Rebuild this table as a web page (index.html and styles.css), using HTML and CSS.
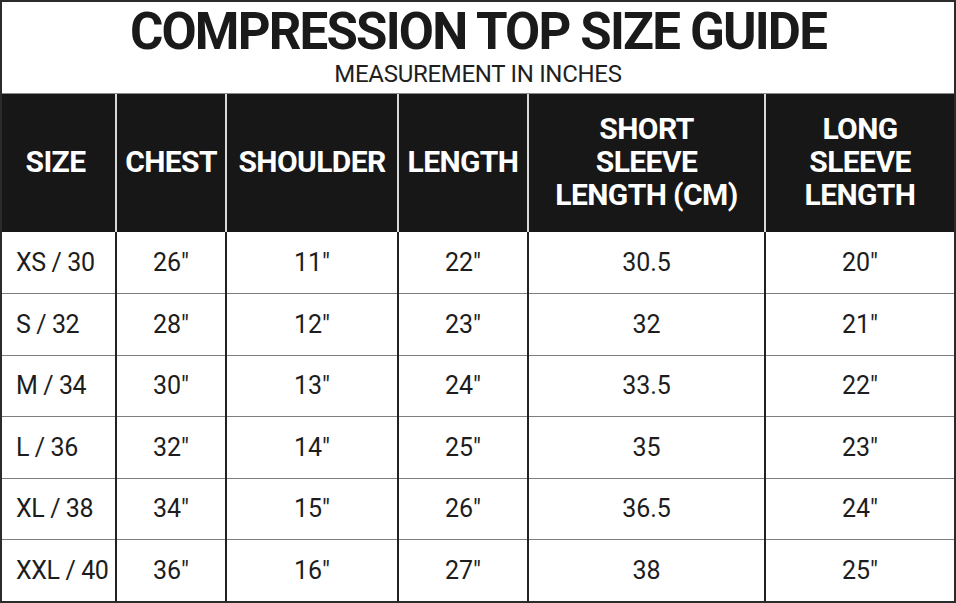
FILE: index.html
```html
<!DOCTYPE html>
<html>
<head>
<meta charset="utf-8">
<link rel="stylesheet" href="styles.css">
</head>
<body>
<div class="guide">
  <header class="title-block">
    <h1 class="title">COMPRESSION TOP SIZE GUIDE</h1>
    <p class="subtitle">MEASUREMENT IN INCHES</p>
  </header>
  <table class="chart">
    <colgroup>
      <col class="c1"><col class="c2"><col class="c3"><col class="c4"><col class="c5"><col class="c6">
    </colgroup>
    <thead>
      <tr>
        <th>SIZE</th>
        <th>CHEST</th>
        <th>SHOULDER</th>
        <th>LENGTH</th>
        <th>SHORT<br>SLEEVE<br>LENGTH (CM)</th>
        <th>LONG<br>SLEEVE<br>LENGTH</th>
      </tr>
    </thead>
    <tbody>
      <tr><td class="size">XS / 30</td><td>26"</td><td>11"</td><td>22"</td><td>30.5</td><td>20"</td></tr>
      <tr><td class="size">S / 32</td><td>28"</td><td>12"</td><td>23"</td><td>32</td><td>21"</td></tr>
      <tr><td class="size">M / 34</td><td>30"</td><td>13"</td><td>24"</td><td>33.5</td><td>22"</td></tr>
      <tr><td class="size">L / 36</td><td>32"</td><td>14"</td><td>25"</td><td>35</td><td>23"</td></tr>
      <tr><td class="size">XL / 38</td><td>34"</td><td>15"</td><td>26"</td><td>36.5</td><td>24"</td></tr>
      <tr><td class="size">XXL / 40</td><td>36"</td><td>16"</td><td>27"</td><td>38</td><td>25"</td></tr>
    </tbody>
  </table>
</div>
</body>
</html>
```
FILE: styles.css
```css
* { box-sizing: border-box; }
html, body { margin: 0; padding: 0; background: #fff; }
body { font-family: Roboto, "Liberation Sans", sans-serif; color: #1b1b1b; }

.guide {
  width: 956px;
  height: 603px;
  border: 2px solid #2b2b2b;
  display: flex;
  flex-direction: column;
  overflow: hidden;
}

.title-block {
  height: 92px;
  border-bottom: 1px solid #8a8a8a;
  display: flex;
  flex-direction: column;
  align-items: center;
}
.title {
  margin: 3px 0 0;
  font-size: 51px;
  line-height: 54px;
  font-weight: 700;
  letter-spacing: -1.8px;
  color: #1a1a1a;
}
.subtitle {
  margin: 2px 0 0;
  font-size: 24px;
  line-height: 26px;
  font-weight: 400;
  letter-spacing: -0.3px;
  color: #1f1f1f;
}

.chart {
  width: 952px;
  border-collapse: collapse;
  table-layout: fixed;
}
.c1 { width: 114px; }
.c2 { width: 110px; }
.c3 { width: 172px; }
.c4 { width: 130px; }
.c5 { width: 237px; }
.c6 { width: 189px; }

.chart th {
  height: 138px;
  background: #171717;
  color: #fff;
  font-size: 30px;
  line-height: 33px;
  font-weight: 700;
  letter-spacing: -0.6px;
  padding: 0 0 4px;
  border-left: 2px solid #d8d8d8;
  text-align: center;
  vertical-align: middle;
}
.chart th:first-child { border-left: none; padding-right: 6px; }

.chart td {
  height: 61.5px;
  font-size: 25px;
  font-weight: 400;
  color: #1d1d1d;
  text-align: center;
  vertical-align: middle;
  padding: 0;
  border-left: 2px solid #222;
  border-top: 1.5px solid #7d7d7d;
}
.chart td:first-child { border-left: none; }
.chart tbody tr:first-child td { border-top: none; }
.chart td.size {
  text-align: left;
  padding-left: 14px;
  letter-spacing: -0.4px;
}
```
